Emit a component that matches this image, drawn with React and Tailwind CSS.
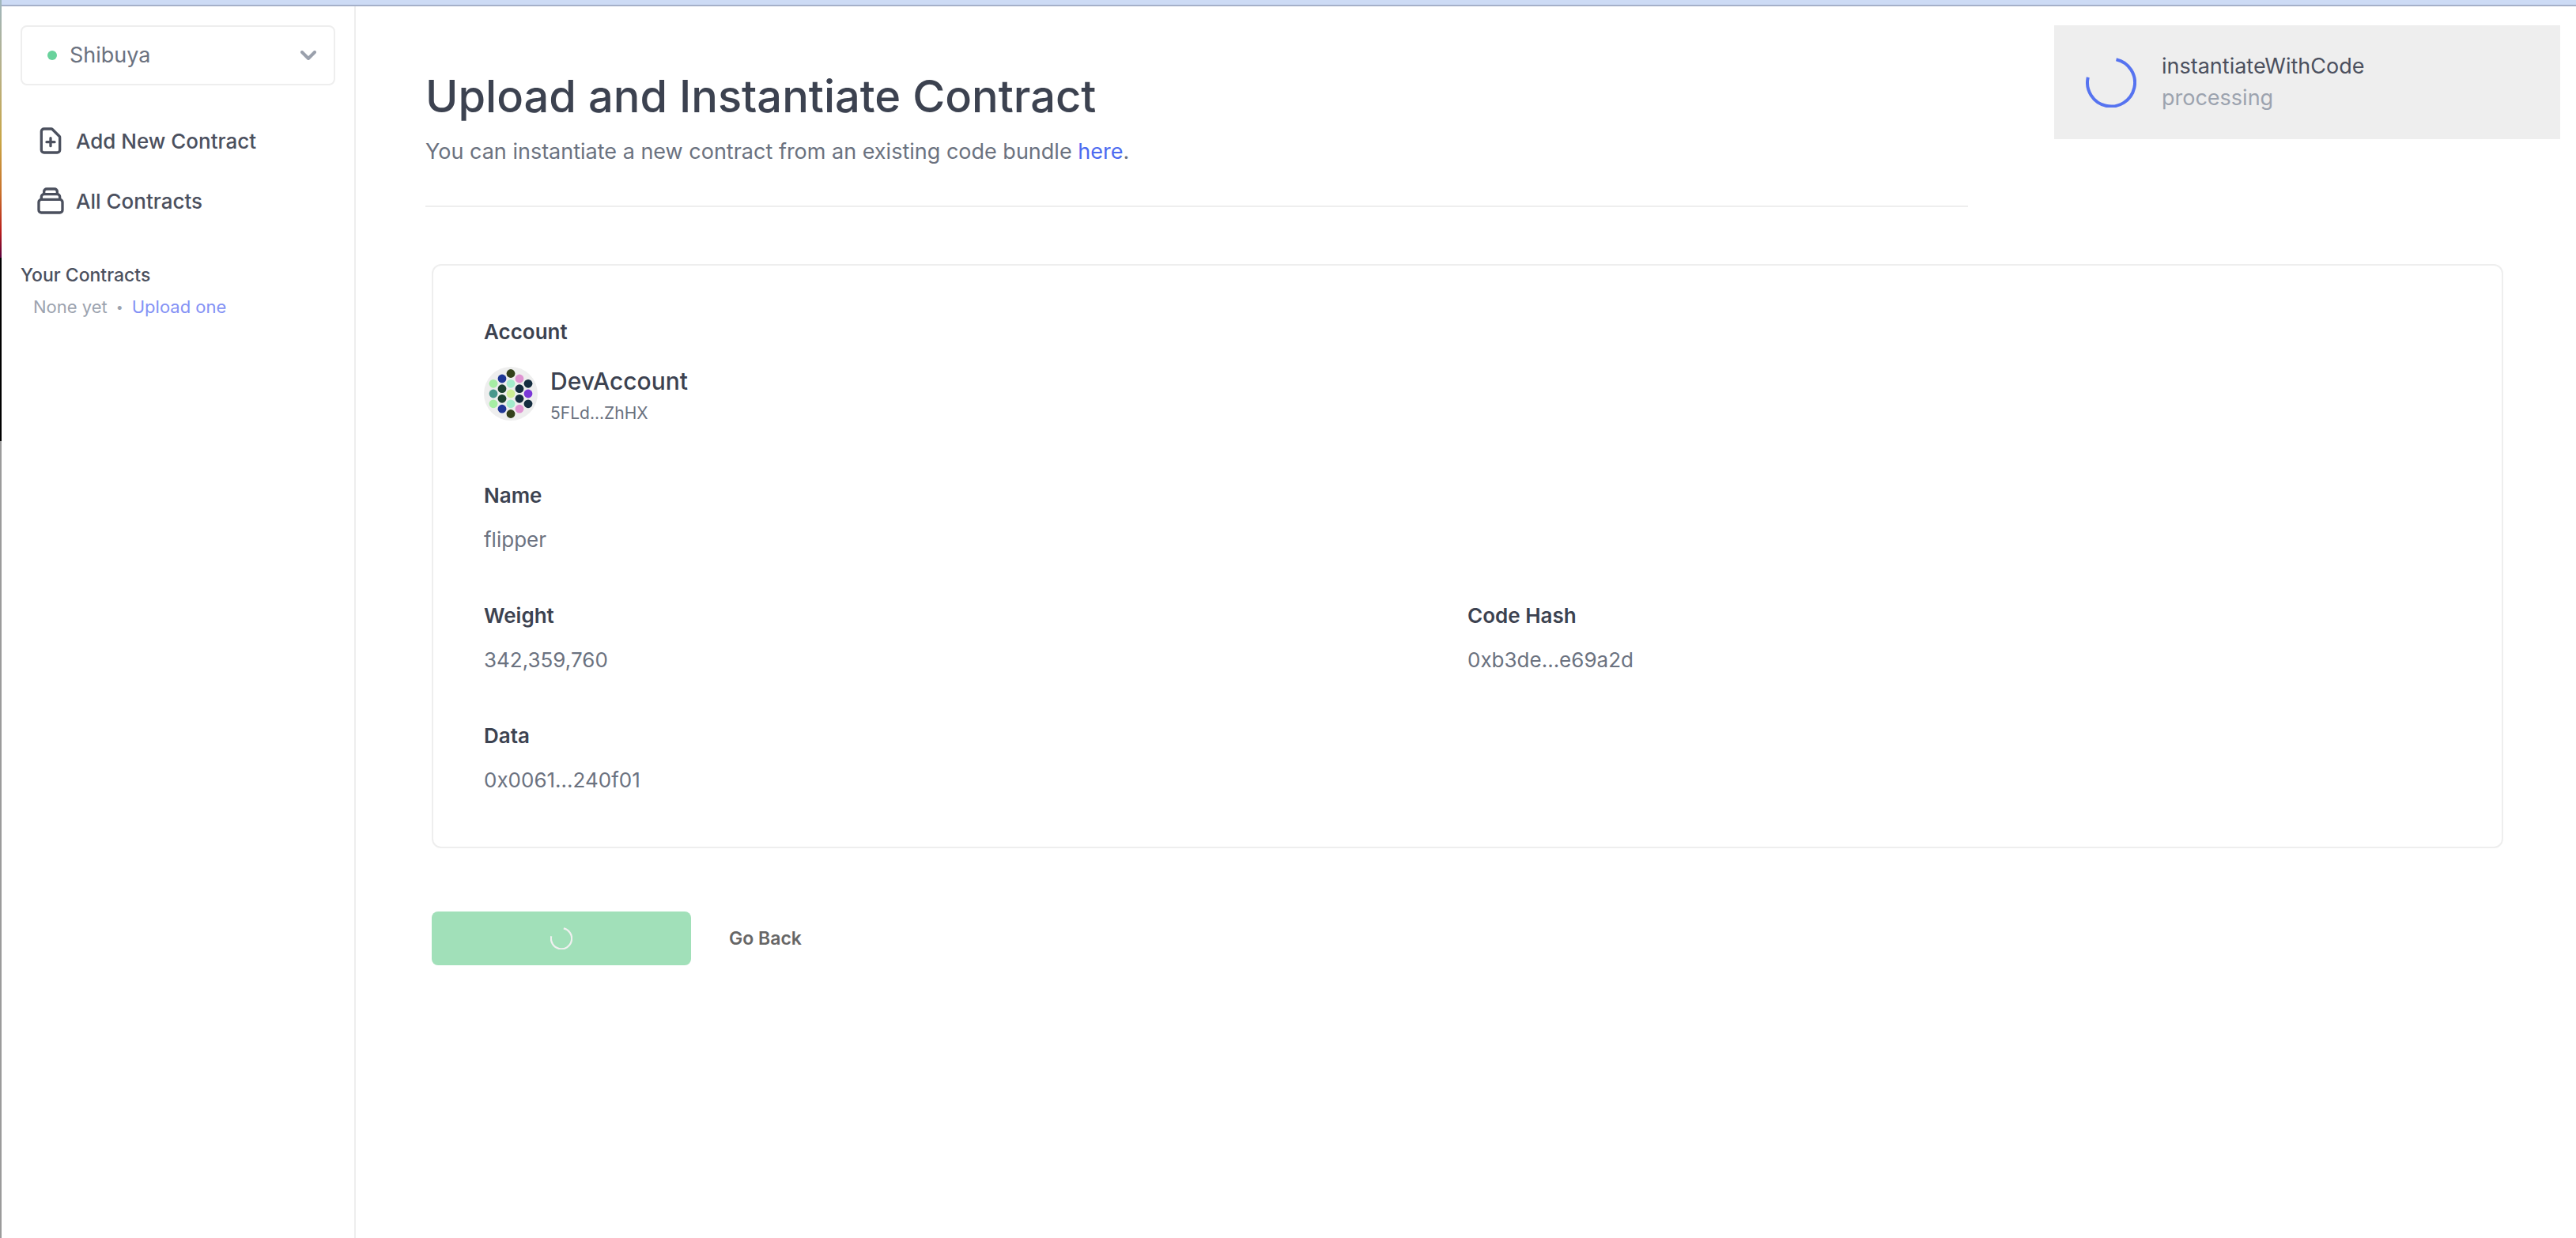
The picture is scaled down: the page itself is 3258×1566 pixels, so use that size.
import React from "react";
import { HiOutlineDocumentAdd, HiOutlineCollection } from "react-icons/hi";

const AVATAR_DOTS = [
  [34, 8.5, "#33401a"],
  [23, 15, "#1f3795"],
  [45, 15, "#df93d2"],
  [12, 21.3, "#a6eda4"],
  [34, 21.3, "#a3ebcc"],
  [56, 21.3, "#152d40"],
  [23, 27.7, "#1d4230"],
  [45, 27.7, "#152d40"],
  [12, 34, "#49988c"],
  [34, 34, "#cdec94"],
  [56, 34, "#7b38d8"],
  [23, 40.3, "#1d4230"],
  [45, 40.3, "#152d40"],
  [12, 46.8, "#a6eda4"],
  [34, 46.8, "#a3ebcc"],
  [56, 46.8, "#152d40"],
  [23, 53.2, "#1f3795"],
  [45, 53.2, "#df93d2"],
  [34, 59.5, "#33401a"],
];

function Avatar() {
  return (
    <svg viewBox="0 0 68 68" className="size-[68px] shrink-0" aria-hidden="true">
      <circle cx="34" cy="34" r="34" fill="#eeeeee" />
      {AVATAR_DOTS.map(([x, y, fill]) => (
        <circle key={`${x}-${y}`} cx={x} cy={y} r="5.4" fill={fill} />
      ))}
    </svg>
  );
}

function Spinner({ className, strokeWidth }) {
  return (
    <svg viewBox="0 0 64 64" fill="none" className={className} aria-hidden="true">
      <path
        d="M38.5 3.2 A30 30 0 1 1 2.8 25.8"
        stroke="currentColor"
        strokeWidth={strokeWidth}
      />
    </svg>
  );
}

function NavItem({ icon: Icon, children }) {
  return (
    <a href="#" className="flex h-[76px] items-center gap-3 pl-[18px] text-[26px] font-medium text-[#4b505e]">
      <Icon className="size-10 shrink-0" />
      <span>{children}</span>
    </a>
  );
}

function Field({ label, children }) {
  return (
    <div className="text-[26px] leading-10">
      <dt className="font-semibold text-[#3c4250]">{label}</dt>
      <dd className="mt-4 text-[#6b7280]">{children}</dd>
    </div>
  );
}

function Sidebar() {
  return (
    <aside className="w-[448px] shrink-0 border-r-2 border-[#eeeeee] px-6 pt-6">
      <div className="relative">
        <span className="absolute top-8 left-[34px] size-3 rounded-full bg-[#69d29c]" />
        <select
          aria-label="Network"
          className="h-[76px] w-full appearance-none rounded-lg border-2 border-[#eeeeee] bg-white pl-[60px] text-[27px] text-[#6b7280]"
        >
          <option>Shibuya</option>
        </select>
        <svg
          viewBox="0 0 20 12"
          fill="none"
          className="pointer-events-none absolute top-8 right-6 h-3 w-5"
          aria-hidden="true"
        >
          <path
            d="M2 2 L10 10 L18 2"
            stroke="#9aa0ac"
            strokeWidth="4"
            strokeLinecap="round"
            strokeLinejoin="round"
          />
        </svg>
      </div>
      <nav className="mt-8">
        <NavItem icon={HiOutlineDocumentAdd}>Add New Contract</NavItem>
        <NavItem icon={HiOutlineCollection}>All Contracts</NavItem>
      </nav>
      <h2 className="mt-9 text-[23px] leading-10 font-medium text-[#4b505e]">Your Contracts</h2>
      <div className="flex items-center gap-[11px] pl-4 text-[22px] leading-10 text-[#9ca3af]">
        <span>None yet</span>
        <span className="text-base leading-10">•</span>
        <a href="#" className="text-[#8492f5]">
          Upload one
        </a>
      </div>
    </aside>
  );
}

function Toast() {
  return (
    <div
      role="status"
      className="absolute top-6 right-5 flex h-36 w-[640px] items-center gap-8 bg-[#eeeeee] pl-10"
    >
      <Spinner className="size-16 text-[#5673f0]" strokeWidth={4} />
      <div className="text-[27px] leading-10">
        <p className="text-[#4b505e]">instantiateWithCode</p>
        <p className="text-[#9ca3af]">processing</p>
      </div>
    </div>
  );
}

export default function App() {
  return (
    <div className="flex min-h-screen bg-white font-['Inter','Liberation_Sans',sans-serif]">
      <div className="flex w-[2px] shrink-0 flex-col">
        <div className="h-[326px] bg-[linear-gradient(to_bottom,#9fb6bd_0%,#b9b083_30%,#c8a545_55%,#c8702a_75%,#b81c1c_90%,#5a003c_100%)]" />
        <div className="h-[232px] bg-black" />
        <div className="flex-1 bg-[#9b9b9b]" />
      </div>
      <div className="flex min-w-0 flex-1 flex-col">
        <div className="h-2 border-b-2 border-[#a5b0c9] bg-[#cddbf5]" />
        <div className="relative flex flex-1">
          <Sidebar />
          <main className="min-w-0 flex-1 pt-20 pr-[84px] pl-[88px]">
            <header className="w-[74%] border-b-2 border-[#eeeeee] pb-12">
              <h1 className="text-[56px] leading-[68px] font-medium text-[#3c4250]">
                Upload and Instantiate Contract
              </h1>
              <p className="mt-4 text-[27px] leading-10 text-[#6b7280]">
                You can instantiate a new contract from an existing code bundle{" "}
                <a href="#" className="text-[#4c6af0]">
                  here
                </a>
                .
              </p>
            </header>
            <div className="mx-2 mt-[72px]">
              <section className="rounded-xl border-2 border-[#eeeeee] p-16">
                <dl className="grid grid-cols-2">
                  <div className="col-span-2">
                    <dt className="text-[26px] leading-10 font-semibold text-[#3c4250]">Account</dt>
                    <dd className="mt-6 mb-[61px] flex items-start gap-4">
                      <Avatar />
                      <div>
                        <p className="text-[30px] leading-9 font-medium text-[#3c4250]">DevAccount</p>
                        <p className="text-[21px] leading-[46px] text-[#6b7280]">5FLd...ZhHX</p>
                      </div>
                    </dd>
                  </div>
                  <div className="col-span-2 mb-14">
                    <Field label="Name">flipper</Field>
                  </div>
                  <div className="mb-14">
                    <Field label="Weight">342,359,760</Field>
                  </div>
                  <Field label="Code Hash">0xb3de...e69a2d</Field>
                  <Field label="Data">0x0061...240f01</Field>
                </dl>
              </section>
              <div className="mt-20 flex items-center gap-12">
                <button
                  type="button"
                  aria-label="Submitting"
                  className="flex h-[68px] w-[328px] items-center justify-center rounded-lg bg-[#a1e0b9]"
                >
                  <Spinner className="size-7 text-[#f0f0f0]" strokeWidth={5} />
                </button>
                <button type="button" className="text-[23px] font-semibold text-[#666666]">
                  Go Back
                </button>
              </div>
            </div>
          </main>
          <Toast />
        </div>
      </div>
    </div>
  );
}
